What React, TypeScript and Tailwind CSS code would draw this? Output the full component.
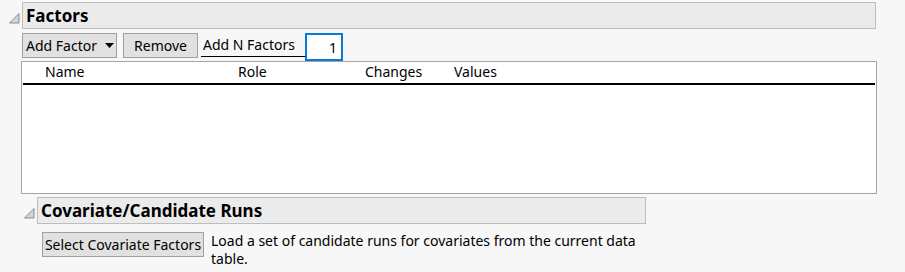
const FONT = { fontFamily: '"Noto Sans", "Open Sans", sans-serif' }

function Disclosure() {
  return (
    <svg width="12" height="12" viewBox="0 0 12 12" className="shrink-0">
      <path d="M11 1.5 L11 11 L1.5 11 Z" fill="#d4d4d4" stroke="#8c8c8c" strokeWidth="1" />
    </svg>
  )
}

function GrayButton({ children, className = '' }: { children: React.ReactNode; className?: string }) {
  return (
    <button
      className={`flex h-[25px] items-center border border-[#a0a0a0] bg-[#e1e1e1] text-[14px] text-[#000] ${className}`}
    >
      {children}
    </button>
  )
}

export default function App() {
  return (
    <div
      className="h-[272px] w-[905px] overflow-hidden bg-[#f7f7f7] pt-[2px] text-[#000]"
      style={FONT}
    >
      {/* Factors outline */}
      <div className="flex items-center">
        <div className="flex w-[22px] justify-end pr-[2px] pt-[4px]">
          <Disclosure />
        </div>
        <div className="flex h-[27px] w-[854px] items-center border border-[#bdbdbd] bg-[#ebebeb] pl-[3px] text-[17px] font-bold">
          Factors
        </div>
      </div>

      <div className="ml-[22px] mt-[4px] flex h-[28px] items-start">
        <GrayButton className="w-[95px] pl-[3px]">
          Add Factor
          <svg width="9" height="5" viewBox="0 0 9 5" className="ml-[8px]">
            <path d="M0 0 L9 0 L4.5 5 Z" fill="#000" />
          </svg>
        </GrayButton>
        <GrayButton className="ml-[6px] w-[75px] justify-center">Remove</GrayButton>
        <div className="ml-[3px] flex h-[24px] w-[104px] items-center border-b border-[#000] pl-[2px] text-[14px]">
          Add N Factors
        </div>
        <div className="flex h-[28px] w-[38px] items-center justify-end border-2 border-[#0a78d7] bg-white pr-[4px] text-[14px]">
          1
        </div>
      </div>

      {/* Factors table */}
      <div className="ml-[21px] h-[133px] w-[856px] border border-[#a6a6a6] bg-white px-px">
        <div className="relative flex h-[23px] items-end border-b-2 border-[#000] pb-[1px] text-[14px]">
          <span className="ml-[22px] w-[193px]">Name</span>
          <span className="w-[127px]">Role</span>
          <span className="w-[89px]">Changes</span>
          <span>Values</span>
        </div>
      </div>

      {/* Covariate outline */}
      <div className="mt-[3px] flex items-center">
        <div className="flex w-[37px] justify-end pr-[2px] pt-[4px]">
          <Disclosure />
        </div>
        <div className="flex h-[27px] w-[609px] items-center border border-[#bdbdbd] bg-[#ebebeb] pl-[3px] text-[17px] font-bold">
          Covariate/Candidate Runs
        </div>
      </div>

      <div className="ml-[42px] mt-[8px] flex items-start">
        <GrayButton className="w-[162px] justify-center">Select Covariate Factors</GrayButton>
        <p className="ml-[7px] w-[436px] text-[14px] leading-[18px]">
          Load a set of candidate runs for covariates from the current data table.
        </p>
      </div>
    </div>
  )
}
